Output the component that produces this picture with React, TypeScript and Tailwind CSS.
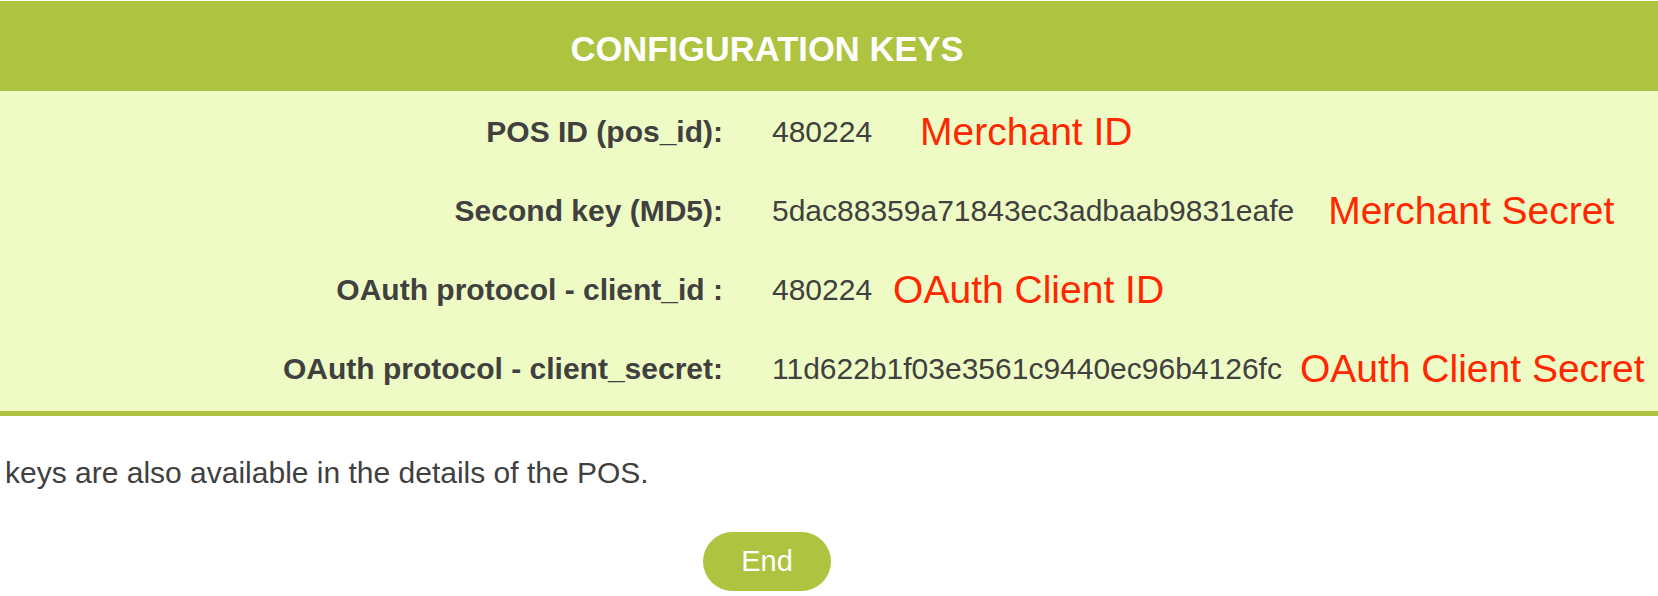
import React from "react";

const rows = [
  { label: "POS ID (pos_id):", value: "480224", note: "Merchant ID", ml: "ml-[48px]" },
  { label: "Second key (MD5):", value: "5dac88359a71843ec3adbaab9831eafe", note: "Merchant Secret", ml: "ml-[34px]" },
  { label: "OAuth protocol - client_id :", value: "480224", note: "OAuth Client ID", ml: "ml-[21px]" },
  { label: "OAuth protocol - client_secret:", value: "11d622b1f03e3561c9440ec96b4126fc", note: "OAuth Client Secret", ml: "ml-[18px]" },
];

export default function App() {
  return (
    <div
      className="w-[1658px] h-[596px] bg-white overflow-hidden text-[#404040]"
      style={{ fontFamily: '"Liberation Sans", Arial, Helvetica, sans-serif' }}
    >
      <div className="mt-px">
        <div className="h-[90px] bg-[#aec33f] flex items-center pt-[7px]">
          <div className="w-[1534px] text-center text-white font-bold text-[34.6px] leading-none">
            CONFIGURATION KEYS
          </div>
        </div>
        <div className="bg-[#effbc4] pt-px pb-[3px] border-b-[5px] border-[#aec33f]">
          {rows.map((r) => (
            <div key={r.label} className="h-[79px] flex items-center">
              <div className="w-[723px] text-right font-bold text-[30px] leading-none whitespace-nowrap">
                {r.label}
              </div>
              <div className="pl-[49px] flex items-center whitespace-nowrap">
                <span className="text-[30px] leading-none">{r.value}</span>
                <span className={`${r.ml} text-[39px] leading-none text-[#ff2600]`}>{r.note}</span>
              </div>
            </div>
          ))}
        </div>
      </div>
      <p className="mt-[42px] text-[30px] leading-none pl-[5px] whitespace-nowrap">
        keys are also available in the details of the POS.
      </p>
      <div className="w-[1534px] flex justify-center mt-[44px]">
        <button className="w-[128px] h-[59px] rounded-full bg-[#aec33f] text-white text-[29px] leading-none flex items-center justify-center">
          End
        </button>
      </div>
    </div>
  );
}
